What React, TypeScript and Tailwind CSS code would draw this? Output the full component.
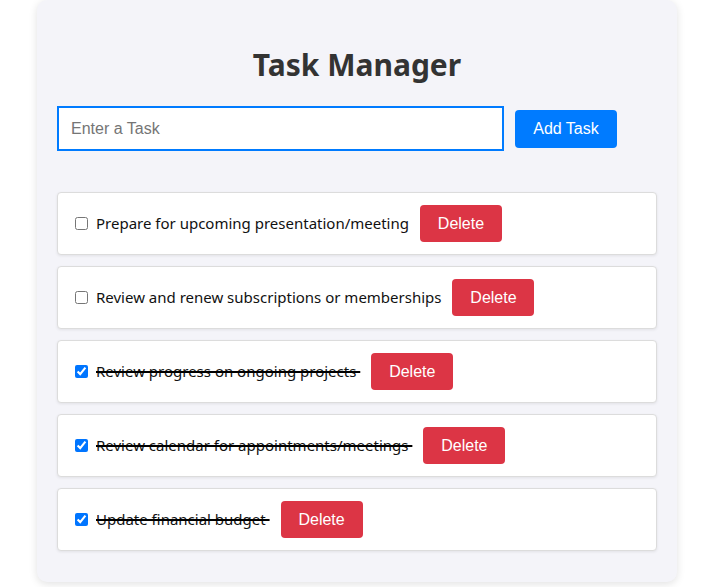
import { useState } from "react";

type Task = { id: number; text: string; done: boolean };

const initial: Task[] = [
  { id: 1, text: "Prepare for upcoming presentation/meeting", done: false },
  { id: 2, text: "Review and renew subscriptions or memberships", done: false },
  { id: 3, text: "Review progress on ongoing projects", done: true },
  { id: 4, text: "Review calendar for appointments/meetings", done: true },
  { id: 5, text: "Update financial budget", done: true },
];

export default function App() {
  const [tasks, setTasks] = useState<Task[]>(initial);
  const [draft, setDraft] = useState("");

  function add() {
    if (!draft.trim()) return;
    setTasks([...tasks, { id: Date.now(), text: draft.trim(), done: false }]);
    setDraft("");
  }

  return (
    <div className="min-h-screen bg-white font-['Noto_Sans',sans-serif]">
      <div className="ml-[37px] w-[640px] rounded-[10px] bg-[#f4f4f9] px-5 pt-[21px] pb-[31px] shadow-[0_2px_8px_rgba(0,0,0,0.12)]">
        <h1 className="mt-[22px] mb-5 text-center text-[30px] font-bold leading-[43px] text-[#333]">
          Task Manager
        </h1>
        <div className="flex items-center">
          <input
            autoFocus
            value={draft}
            onChange={(e) => setDraft(e.target.value)}
            placeholder="Enter a Task"
            className="h-[45px] w-[447px] border-2 border-[#007bff] bg-white px-3 font-['Liberation_Sans',sans-serif] text-base text-[#333] outline-none placeholder:text-[#757575]"
          />
          <button
            onClick={add}
            className="ml-[11px] h-[38px] w-[102px] rounded-[4px] bg-[#007bff] font-['Liberation_Sans',sans-serif] text-base text-white"
          >
            Add Task
          </button>
        </div>
        <ul className="mt-[41px] space-y-[11px]">
          {tasks.map((t) => (
            <li
              key={t.id}
              className="flex h-[63px] items-center rounded-[4px] border border-[#dcdcdc] bg-white px-3 shadow-[0_1px_3px_rgba(0,0,0,0.08)]"
            >
              <input
                type="checkbox"
                checked={t.done}
                onChange={() =>
                  setTasks(tasks.map((x) => (x.id === t.id ? { ...x, done: !x.done } : x)))
                }
                className="ml-[5px] h-[13px] w-[13px] accent-[#0075ff]"
              />
              <span
                className={
                  "ml-2 whitespace-pre text-[15px] text-[#111] " +
                  (t.done ? "line-through decoration-black decoration-[1.5px]" : "")
                }
              >
                {t.done ? t.text + "\u00a0" : t.text}
              </span>
              <button
                onClick={() => setTasks(tasks.filter((x) => x.id !== t.id))}
                className="ml-[11px] h-[37px] w-[82px] rounded-[4px] bg-[#dc3545] font-['Liberation_Sans',sans-serif] text-base text-white"
              >
                Delete
              </button>
            </li>
          ))}
        </ul>
      </div>
    </div>
  );
}
